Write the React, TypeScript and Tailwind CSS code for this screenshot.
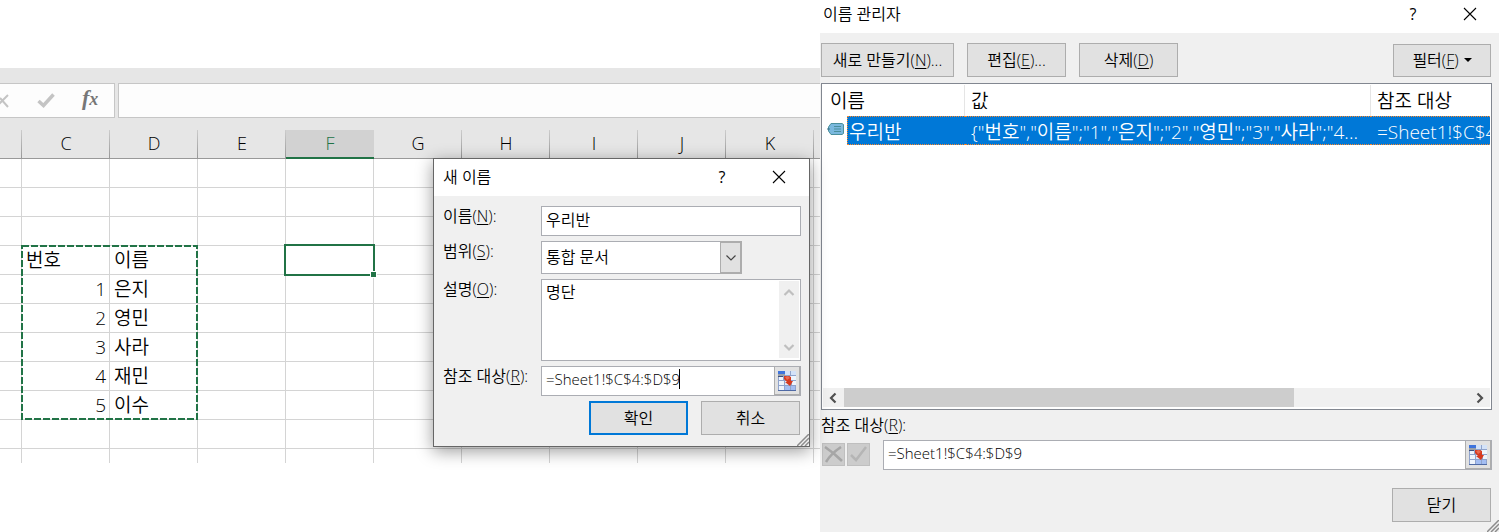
import { useState } from "react";
import type { ReactNode } from "react";

const COLUMNS = ["C", "D", "E", "F", "G", "H", "I", "J", "K"];

const CELLS: Record<string, string> = {
  C4: "번호", D4: "이름",
  C5: "1", D5: "은지",
  C6: "2", D6: "영민",
  C7: "3", D7: "사라",
  C8: "4", D8: "재민",
  C9: "5", D9: "이수",
};

const ROWS = [1, 2, 3, 4, 5, 6, 7, 8, 9, 10];

const BUTTON = "flex items-center justify-center border border-[#adadad] bg-[#e1e1e1]";

function Key({ children }: { children: string }) {
  return <>(<span className="underline underline-offset-2">{children}</span>)</>;
}

function Chevron({ d, color }: { d: string; color: string }) {
  return (
    <svg width="12" height="12" viewBox="0 0 12 12" fill="none" stroke={color} strokeWidth="2.2">
      <path d={d} />
    </svg>
  );
}

function CloseIcon() {
  return (
    <svg width="14" height="14" viewBox="0 0 14 14" stroke="#000" strokeWidth="1.1">
      <path d="M1 1l12 12M13 1L1 13" />
    </svg>
  );
}

function RangeIcon() {
  return (
    <svg width="18" height="20" viewBox="0 0 18 20">
      <rect width="18" height="20" fill="#8fa3cc" />
      <path d="M0 0h7v3H0z" fill="#3f74dc" />
      <path d="M7 0h5v4H7zM13 0h5v4h-5z" fill="#d3e2f8" />
      <path d="M0 3h7v2H0z" fill="#9aa0a8" />
      <path d="M0 5h5v1H0z" fill="#3d4f7c" />
      <path d="M1 6h4v3H1zM1 10h5v4H1zM1 15h5v4H1zM12 5h6v4h-6zM14 10h4v4h-4z" fill="#eef4fc" />
      <path d="M7 10h5v4H7z" fill="#dbe7fa" />
      <path d="M7 15h5v4H7zM13 15h4v4h-4z" fill="#a3bdf2" />
      <path d="M0 19h18v1H0z" fill="#4f6aa5" />
      <path d="M6 5h5l2 1v4h2l-3 5-5-4h2L6 8z" fill="#d63a20" />
      <path d="M7 6l3-1 2 2-3 2z" fill="#ea6a50" />
    </svg>
  );
}

function TagIcon() {
  return (
    <svg width="18" height="12" viewBox="0 0 18 12">
      <path d="M4 .5h11l1.500 1v9l-1.500 1H4L1.500 8V4z" fill="#7ab8de" stroke="#4a8f9c" />
      <path d="M7 3.500h7M7 6h7M7 8.500h7" stroke="#4a8f9c" />
      <path d="M0 6h3" stroke="#356f88" />
    </svg>
  );
}

function Grip() {
  return (
    <svg className="absolute right-0 bottom-0" width="12" height="12" viewBox="0 0 12 12" stroke="#8c8c8c" strokeWidth="1.500">
      <path d="M0 12L12 0M4 12l8-8M8 12l4-4" />
    </svg>
  );
}

function TitleBar({ title, className }: { title: string; className: string }) {
  return (
    <header className={`flex items-center bg-white ${className}`}>
      <h2>{title}</h2>
      <button className="ml-auto w-4 text-center font-normal" aria-label="도움말">?</button>
      <button className="ml-[42px]" aria-label="창 닫기"><CloseIcon /></button>
    </header>
  );
}

function RefField({ id, value, onChange, children }: {
  id: string;
  value: string;
  onChange: (v: string) => void;
  children?: ReactNode;
}) {
  return (
    <div className="relative flex h-[30px] min-w-0 flex-1 border border-[#abadb3] bg-white">
      <input
        id={id}
        className="min-w-0 flex-1 px-1 pb-1 text-[15px] outline-none"
        value={value}
        onChange={e => onChange(e.target.value)}
      />
      {children}
      <button
        className="flex w-[26px] items-center justify-center border-r border-b border-l border-[#adadad] bg-[#e1e1e1]"
        aria-label="범위 선택"
      >
        <RangeIcon />
      </button>
    </div>
  );
}

function FormulaBar() {
  return (
    <div className="flex gap-[3px] pt-[15px]">
      <div className="flex h-[35px] w-[115px] items-center border border-l-0 border-[#c6c6c6] bg-[#fdfdfd]">
        <button aria-label="취소">
          <svg width="9" height="14" viewBox="0 0 9 14" fill="none" stroke="#c4c4c4" strokeWidth="2">
            <path d="M-4 13L8 1M0 4l8 9" />
          </svg>
        </button>
        <button className="ml-7" aria-label="입력">
          <svg width="18" height="15" viewBox="0 0 18 15" fill="none" stroke="#c4c4c4" strokeWidth="3.500">
            <path d="M1.500 8l5 4.500L16.500 1.500" />
          </svg>
        </button>
        <button
          className="ml-[27px] pb-1 font-['Liberation_Serif',serif] text-[22px] leading-6 font-bold text-[#777] italic"
          aria-label="함수 삽입"
        >
          f<span className="text-[18px]">x</span>
        </button>
      </div>
      <input className="h-[35px] min-w-0 flex-1 border border-r-0 border-[#c6c6c6] bg-[#fdfdfd] px-2 outline-none" aria-label="수식 입력줄" />
    </div>
  );
}

function Sheet() {
  return (
    <table className="w-full table-fixed border-separate border-spacing-0 text-[19px]">
      <colgroup>
        <col className="w-[22px]" />
        {COLUMNS.map(c => <col key={c} className="w-[88px]" />)}
        <col />
      </colgroup>
      <thead>
        <tr className="h-[29px] bg-[#e6e6e6] text-[18px] leading-6">
          <th className="border-b border-[#999] bg-linear-to-b from-[#ccc] to-[#999] bg-[length:1px_100%] bg-right bg-no-repeat p-0" />
          {COLUMNS.map(c => (
            <th
              key={c}
              className={c === "F"
                ? "border-b-2 border-[#217346] bg-[#d2d2d2] px-0 pt-0 pb-[2px] font-[350] text-[#217346]"
                : "border-b border-[#999] bg-linear-to-b from-[#ccc] to-[#999] bg-[length:1px_100%] bg-right bg-no-repeat px-0 pt-0 pb-[2px] font-[350]"}
            >
              {c}
            </th>
          ))}
          <th className="border-b border-[#999] p-0" />
        </tr>
      </thead>
      <tbody>
        {ROWS.map(r => (
          <tr key={r} className="h-[29px] leading-6">
            <td className="border-r border-b border-[#d4d4d4] p-0" />
            {COLUMNS.map(c => {
              const text = CELLS[c + r];
              const numeric = c === "C" && r > 4;
              return (
                <td
                  key={c}
                  className={`relative border-r border-b border-[#d4d4d4] py-0 ${numeric ? "px-[3px] text-right" : "px-1 text-left"}`}
                >
                  {text}
                  {/* copied range */}
                  {c === "C" && r === 4 && (
                    <svg className="absolute -top-px -left-px z-10" width="177" height="175" fill="none" stroke="#217346" strokeWidth="2">
                      <rect x="1" y="1" width="175" height="173" strokeDasharray="7 2" />
                    </svg>
                  )}
                  {/* active cell */}
                  {c === "F" && r === 4 && (
                    <span className="absolute -top-[2px] -right-[2px] -bottom-[2px] -left-[2px] z-10 border-2 border-[#217346]">
                      <span className="absolute -right-1 -bottom-1 size-[7px] border border-white bg-[#217346]" />
                    </span>
                  )}
                </td>
              );
            })}
            <td className="border-b border-[#d4d4d4] p-0" />
          </tr>
        ))}
        <tr className="h-[14px]">
          <td className="border-r border-[#d4d4d4] p-0" />
          {COLUMNS.map(c => <td key={c} className="border-r border-[#d4d4d4] p-0" />)}
          <td className="p-0" />
        </tr>
      </tbody>
    </table>
  );
}

function NewNameDialog() {
  const [name, setName] = useState("우리반");
  const [comment, setComment] = useState("명단");
  const [refersTo, setRefersTo] = useState("=Sheet1!$C$4:$D$9");

  return (
    <section className="absolute top-[158px] left-[433px] z-20 w-[377px] border border-[#666] bg-[#f0f0f0] shadow-[0_4px_16px_rgba(0,0,0,0.4)]">
      <TitleBar title="새 이름" className="h-[37px] pr-[23px] pb-px pl-[9px]" />
      <div className="grid grid-cols-[98px_1fr] gap-y-[5px] pt-[10px] pr-2 pb-[11px] pl-[9px] leading-5">
        <label htmlFor="name">이름<Key>N</Key>:</label>
        <input
          id="name"
          className="h-[30px] min-w-0 border border-[#abadb3] bg-white px-1 pb-[5px] outline-none"
          value={name}
          onChange={e => setName(e.target.value)}
        />

        <label htmlFor="scope">범위<Key>S</Key>:</label>
        <div className="relative h-[33px] w-[201px]">
          <select id="scope" className="size-full appearance-none border border-[#abadb3] bg-white px-1 pb-[2px] outline-none">
            <option>통합 문서</option>
            <option>Sheet1</option>
          </select>
          <span className="pointer-events-none absolute inset-y-0 right-0 flex w-[22px] items-center justify-center border-2 border-l border-[#adadad] bg-[#e1e1e1]">
            <svg width="10" height="6" viewBox="0 0 10 6" fill="none" stroke="#444" strokeWidth="1.200">
              <path d="M.5 .5L5 5 9.500 .5" />
            </svg>
          </span>
        </div>

        <label htmlFor="comment">설명<Key>O</Key>:</label>
        <div className="flex h-[82px] border border-[#abadb3] bg-white p-px">
          <textarea
            id="comment"
            className="min-w-0 flex-1 resize-none overflow-hidden px-[3px] leading-[22px] outline-none"
            value={comment}
            onChange={e => setComment(e.target.value)}
          />
          <div className="mb-px flex w-5 flex-col items-center justify-between bg-[#f0f0f0] py-[5px]">
            <Chevron d="M1.500 9L6 4.500 10.500 9" color="#bfbfbf" />
            <Chevron d="M1.500 4L6 8.500 10.500 4" color="#bfbfbf" />
          </div>
        </div>

        <label htmlFor="refers">참조 대상<Key>R</Key>:</label>
        <RefField id="refers" value={refersTo} onChange={setRefersTo}>
          <span className="absolute top-[2px] left-[137px] h-5 w-px bg-black" />
        </RefField>

        <div className="col-span-2 flex justify-end gap-[13px] pr-px">
          <button className="flex h-[34px] w-[99px] items-center justify-center border-2 border-[#0078d7] bg-[#e1e1e1]">확인</button>
          <button className={`h-[34px] w-[99px] ${BUTTON}`}>취소</button>
        </div>
      </div>
      <Grip />
    </section>
  );
}

function NameList() {
  return (
    <div className="flex h-[327px] flex-col overflow-hidden border border-[#828790] bg-white px-px pt-px pb-[2px]">
      <table className="w-full table-fixed border-separate border-spacing-0 text-left text-[19px] whitespace-nowrap">
        <colgroup>
          <col className="w-6" />
          <col className="w-[118px]" />
          <col className="w-[406px]" />
          <col />
        </colgroup>
        <thead>
          <tr className="h-[31px] leading-6">
            <th colSpan={2} className="border-r border-[#e5e5e5] py-0 pr-0 pl-[7px] font-[350]">이름</th>
            <th className="border-r border-[#e5e5e5] py-0 pr-0 pl-[6px] font-[350]">값</th>
            <th className="py-0 pr-0 pl-[6px] font-[350]">참조 대상</th>
          </tr>
        </thead>
        <tbody>
          <tr className="h-[29px] leading-6 text-white">
            <td className="px-1 pt-0 pb-[3px]"><TagIcon /></td>
            <td className="border-y border-l border-dotted border-[#ff8728] bg-[#0078d7] px-px pt-[2px] pb-0">우리반</td>
            <td className="border-y border-dotted border-[#ff8728] bg-[#0078d7] pt-[2px] pr-0 pb-0 pl-[6px]">
              {'{"번호","이름";"1","은지";"2","영민";"3","사라";"4...'}
            </td>
            <td className="overflow-hidden border-y border-dotted border-[#ff8728] bg-[#0078d7] pt-[2px] pr-0 pb-0 pl-[6px]">=Sheet1!$C$4:$D$9</td>
          </tr>
        </tbody>
      </table>
      <div className="mt-auto flex h-[19px] items-center bg-[#f0f0f0]">
        <span className="flex w-[21px] justify-center pr-[2px]"><Chevron d="M8.500 1.500L4 6l4.500 4.500" color="#505050" /></span>
        <div className="h-full flex-1"><div className="h-full w-[72%] bg-[#cdcdcd]" /></div>
        <span className="flex w-[21px] justify-center"><Chevron d="M3.500 1.500L8 6l-4.500 4.500" color="#505050" /></span>
      </div>
    </div>
  );
}

function NameManager() {
  const [refersTo, setRefersTo] = useState("=Sheet1!$C$4:$D$9");

  return (
    <section className="relative flex min-w-0 flex-col bg-[#f0f0f0]">
      <TitleBar title="이름 관리자" className="h-[33px] pr-[22px] pb-[5px] pl-[3px]" />
      <div className="flex flex-col pt-[10px] pr-[7px] pb-[10px] pl-px">
        <div className="flex items-end gap-[13px]">
          <button className={`h-[34px] w-[133px] ${BUTTON}`}>새로 만들기<Key>N</Key>...</button>
          <button className={`h-[34px] w-[99px] ${BUTTON}`}>편집<Key>E</Key>...</button>
          <button className={`h-[34px] w-[99px] ${BUTTON}`}>삭제<Key>D</Key></button>
          <button className={`mr-px ml-auto h-[33px] w-[98px] pb-px ${BUTTON}`}>
            필터<Key>F</Key>
            <svg className="ml-[5px]" width="8" height="4" viewBox="0 0 8 4"><path d="M0 0h8L4 4z" /></svg>
          </button>
        </div>

        <div className="pt-[6px]"><NameList /></div>

        <label htmlFor="manager-refers" className="pt-1 pb-1 leading-[22px]">참조 대상<Key>R</Key>:</label>
        <div className="flex gap-[13px]">
          <div className="flex gap-[2px] pt-[3px] pl-px">
            <button className="flex size-[23px] items-center justify-center border border-[#bfbfbf] bg-[#ccc]" aria-label="취소" disabled>
              <svg width="19" height="17" viewBox="0 0 19 17" fill="none" stroke="#a6a6a6" strokeWidth="2.500">
                <path d="M1 1c6 4 12 9 17 14M17 1C11 5 5 11 2 16" />
              </svg>
            </button>
            <button className="flex size-[23px] items-center justify-center border border-[#bfbfbf] bg-[#ccc]" aria-label="입력" disabled>
              <svg width="17" height="17" viewBox="0 0 17 17" fill="none" stroke="#b5b5b5" strokeWidth="2.500">
                <path d="M1 9l5 5L16 1" />
              </svg>
            </button>
          </div>
          <RefField id="manager-refers" value={refersTo} onChange={setRefersTo} />
        </div>

        <div className="flex justify-end pt-[18px] pr-px">
          <button className={`h-[34px] w-[99px] ${BUTTON}`}>닫기</button>
        </div>
      </div>
      <Grip />
    </section>
  );
}

export default function App() {
  return (
    <main className="grid grid-cols-[820fr_679fr] bg-white font-['Open_Sans','Noto_Sans_CJK_KR',sans-serif] text-[16px] font-[350] text-black">
      <div className="relative min-w-0 pt-[68px]">
        <div className="bg-[#e6e6e6] pb-3"><FormulaBar /></div>
        <Sheet />
        <NewNameDialog />
      </div>
      <NameManager />
    </main>
  );
}
